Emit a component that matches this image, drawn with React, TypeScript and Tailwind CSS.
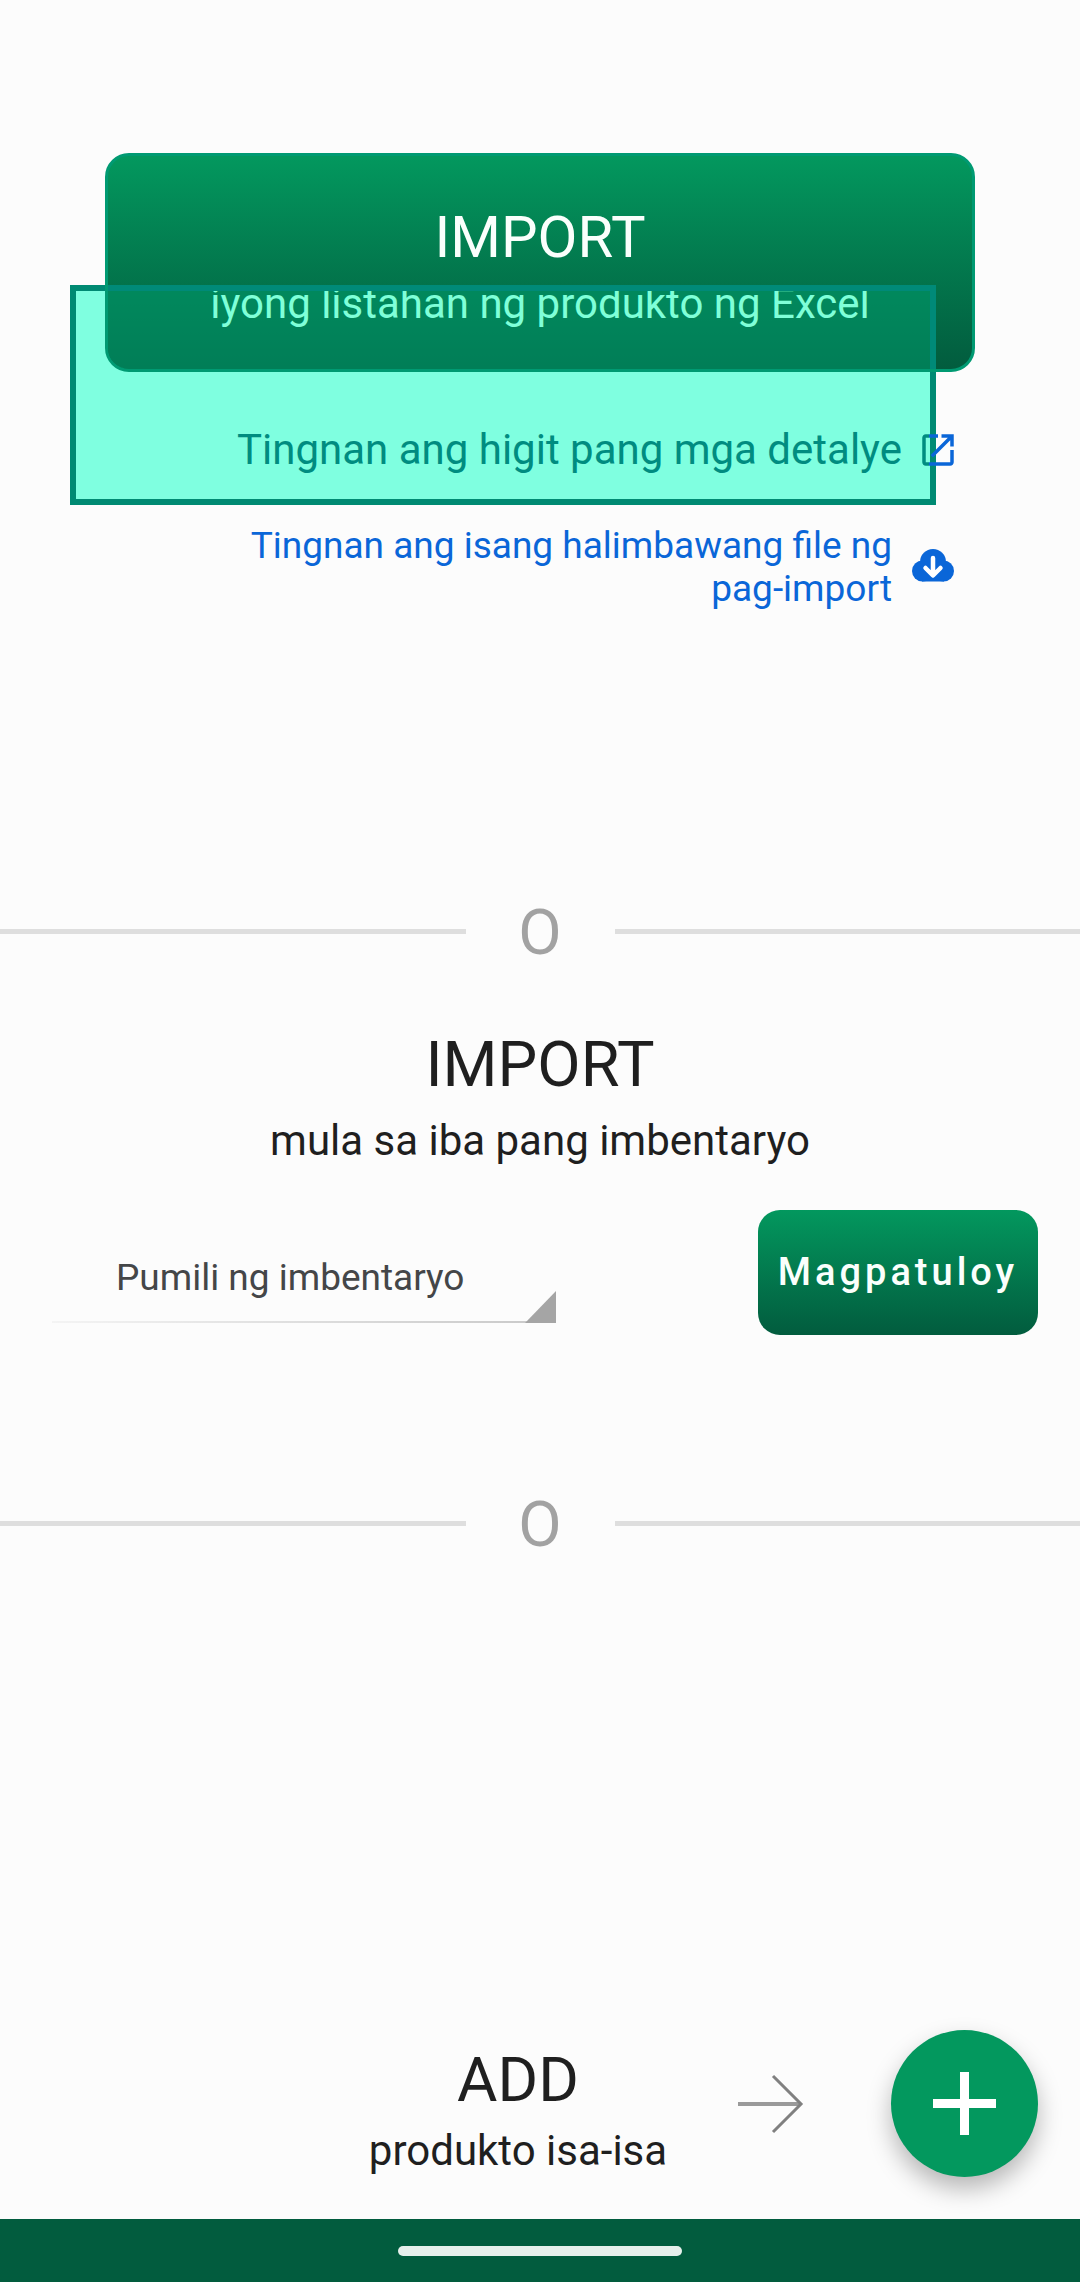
function Divider({ className = '' }: { className?: string }) {
  return (
    <div className={`flex items-center ${className}`}>
      <div className="h-[5px] flex-1 bg-[#dedede]" />
      <div className="w-[149px] pt-[4px] text-center text-[63px] leading-[66px] text-[#a2a2a2]">O</div>
      <div className="h-[5px] flex-1 bg-[#dedede]" />
    </div>
  )
}

function ExternalIcon() {
  return (
    <svg viewBox="0 0 24 24" className="h-[42px] w-[42px] shrink-0">
      <defs>
        <linearGradient id="split" gradientUnits="userSpaceOnUse" x1="0" y1="0" x2="24" y2="0">
          <stop offset="0.29" stopColor="#008c80" />
          <stop offset="0.29" stopColor="#0a66d8" />
        </linearGradient>
      </defs>
      <path
        fill="url(#split)"
        d="M19 19H5V5h7V3H5c-1.11 0-2 .9-2 2v14c0 1.1.89 2 2 2h14c1.1 0 2-.9 2-2v-7h-2v7zM14 3v2h3.59l-9.83 9.83 1.41 1.41L19 6.41V10h2V3h-7z"
      />
    </svg>
  )
}

function CloudIcon() {
  return (
    <svg viewBox="0 0 42 33" className="-mt-[3px] h-[33px] w-[42px] shrink-0">
      <g fill="#0a66d8">
        <circle cx="21" cy="13" r="13" />
        <circle cx="10.5" cy="22" r="10.5" />
        <circle cx="31.5" cy="22" r="10.5" />
        <rect x="10" y="14" width="22" height="18.5" />
      </g>
      <path
        d="M21 9v15M13.5 19l7.5 7.5 7.5-7.5"
        fill="none"
        stroke="#fff"
        strokeWidth="4.5"
        strokeLinecap="round"
        strokeLinejoin="round"
      />
    </svg>
  )
}

export default function App() {
  return (
    <div className="relative flex h-[2282px] flex-col overflow-hidden bg-[#fcfcfc] font-['Roboto',sans-serif]">
      {/* highlighted box sits behind the import button */}
      <div className="absolute left-[70px] top-[285px] h-[220px] w-[866px] border-[6px] border-[#008a73] bg-[#7fffe0]" />

      <div className="relative mx-[105px] mt-[153px] h-[219px] overflow-hidden rounded-[24px] border-[3px] border-[#009a72] bg-linear-to-b from-[#03985e] to-[#025c3e] text-center">
        <div className="mt-[48px] text-[58px] leading-[66px] text-[#fafffc]">IMPORT</div>
        <div className="absolute left-[-38px] top-[129px] h-[220px] w-[866px] overflow-hidden border-[6px] border-[#008a78] bg-[#00a070]/50">
          <div className="-mt-[11px] pl-[74px] text-[42px] leading-[48px] text-[#7fffd8]">
            iyong listahan ng produkto ng Excel
          </div>
        </div>
      </div>

      <div className="relative mt-[54px] flex items-center justify-end gap-[15px] pr-[121px]">
        <span className="text-[42px] leading-[48px] text-[#008c80]">Tingnan ang higit pang mga detalye</span>
        <ExternalIcon />
      </div>

      <div className="relative mt-[50px] flex items-center justify-end gap-[20px] pr-[126px]">
        <span className="w-[660px] text-right text-[37px] leading-[43px] text-[#0a66d8]">
          Tingnan ang isang halimbawang file ng pag-import
        </span>
        <CloudIcon />
      </div>

      <Divider className="mt-[286px]" />

      <div className="mt-[63px] text-center text-[#1f1f1f]">
        <div className="text-[63px] leading-[72px]">IMPORT</div>
        <div className="mt-[15px] text-[42px] leading-[50px]">mula sa iba pang imbentaryo</div>
      </div>

      <div className="mt-[44px] flex items-end pl-[52px]">
        <div className="relative mb-[12px] h-[70px] w-[504px]">
          <div className="pl-[64px] pt-[3px] text-[37px] leading-[44px] text-[#444648]">Pumili ng imbentaryo</div>
          <div className="absolute bottom-0 left-0 h-[2px] w-full bg-linear-to-r from-[#f4f4f4] to-[#c8c8c8]" />
          <div className="absolute bottom-0 right-0 h-[32px] w-[31px] bg-[#a5a5a5] [clip-path:polygon(100%_0,100%_100%,0_100%)]" />
        </div>
        <button className="ml-[202px] h-[125px] w-[280px] rounded-[22px] bg-linear-to-b from-[#03985e] to-[#025c3e] text-[38px] font-medium tracking-[4px] text-[#fafffc]">
          Magpatuloy
        </button>
      </div>

      <Divider className="mt-[153px]" />

      <div className="mt-auto flex items-center pb-[42px]">
        <div className="ml-[300px] mt-[12px] w-[436px] text-center text-[#1f1f1f]">
          <div className="text-[62px] leading-[72px]">ADD</div>
          <div className="mt-[10px] text-[42px] leading-[50px]">produkto isa-isa</div>
        </div>
        <svg viewBox="0 0 66 60" className="ml-[2px] h-[60px] w-[66px] shrink-0">
          <path d="M0 30h63" stroke="#9a9a9a" strokeWidth="4" />
          <path d="M35 2l28 28-28 28" fill="none" stroke="#808080" strokeWidth="3" />
        </svg>
        <button className="ml-[87px] flex h-[147px] w-[147px] items-center justify-center rounded-full bg-[#03985e] shadow-[0_12px_24px_rgba(0,0,0,0.28)]">
          <svg viewBox="0 0 63 63" className="h-[63px] w-[63px]">
            <path d="M27 0h9v27h27v9H36v27h-9V36H0v-9h27z" fill="#fff" />
          </svg>
        </button>
      </div>

      <div className="flex h-[63px] items-center justify-center bg-[#025c3e]">
        <div className="h-[10px] w-[284px] rounded-full bg-[#e6f0ec]" />
      </div>
    </div>
  )
}
